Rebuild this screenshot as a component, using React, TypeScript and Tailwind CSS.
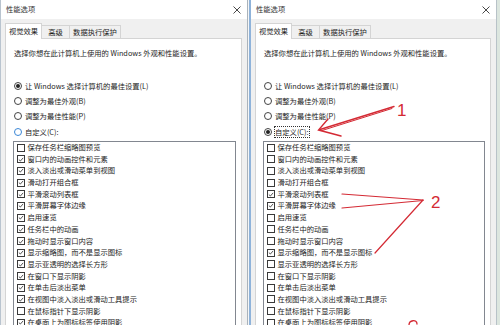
import React from "react";

const items = [
  "保存任务栏缩略图预览",
  "窗口内的动画控件和元素",
  "淡入淡出或滑动菜单到视图",
  "滑动打开组合框",
  "平滑滚动列表框",
  "平滑屏幕字体边缘",
  "启用速览",
  "任务栏中的动画",
  "拖动时显示窗口内容",
  "显示缩略图，而不是显示图标",
  "显示亚透明的选择长方形",
  "在窗口下显示阴影",
  "在单击后淡出菜单",
  "在视图中淡入淡出或滑动工具提示",
  "在鼠标指针下显示阴影",
  "在桌面上为图标标签使用阴影",
];

const leftChecks = [0, 1, 1, 1, 1, 1, 1, 1, 1, 1, 1, 1, 1, 1, 0, 1];
const rightChecks = [0, 0, 0, 0, 1, 1, 0, 0, 0, 1, 0, 0, 0, 0, 0, 0];

const radios = [
  "让 Windows 选择计算机的最佳设置(L)",
  "调整为最佳外观(B)",
  "调整为最佳性能(P)",
  "自定义(C):",
];

function Radio({ selected, hover, focus, label }: { selected: boolean; hover: boolean; focus: boolean; label: string }) {
  return (
    <div className="flex items-center h-[15.3px]">
      <div
        className={
          "w-[8px] h-[8px] rounded-full border bg-white flex items-center justify-center shrink-0 " +
          (hover ? "border-[#3b87d6]" : "border-[#444]")
        }
      >
        {selected && <div className="w-[4px] h-[4px] rounded-full bg-[#222]" />}
      </div>
      <span
        className={
          "ml-[3px] whitespace-nowrap leading-[10px] " +
          (focus ? "outline outline-1 outline-dotted outline-[#333]" : "")
        }
      >
        {label}
      </span>
    </div>
  );
}

function CheckBox({ checked }: { checked: boolean }) {
  return (
    <div className="w-[8px] h-[8px] border border-[#3a3a3a] bg-white shrink-0 flex items-center justify-center">
      {checked && (
        <svg width="7" height="7" viewBox="0 0 7 7">
          <path d="M1 3.6 L2.8 5.3 L6 1.6" fill="none" stroke="#222" strokeWidth="0.9" />
        </svg>
      )}
    </div>
  );
}

function Window({ sel, checks, right }: { sel: number; checks: number[]; right: boolean }) {
  return (
    <div
      className={
        "w-[248px] h-[325px] flex flex-col shrink-0 overflow-hidden " +
        (right ? "border-l-2 border-l-[#8fb3da] border-r border-r-[#b8c2c8]" : "border-l border-l-[#b9c4cf] border-r border-r-[#aab3bb]")
      }
    >
      <div className="h-[19px] bg-white flex items-center justify-between pl-[5px] pr-[5px] shrink-0">
        <span className="text-[#333]">性能选项</span>
        <svg width="8" height="8" viewBox="0 0 8 8" className="mr-[1px]">
          <path d="M0.5 0.5 L7.5 7.5 M7.5 0.5 L0.5 7.5" stroke="#333" strokeWidth="0.9" />
        </svg>
      </div>
      <div className="flex-1 bg-[#f0f0f0] flex flex-col pt-[3px] pl-[4px] pr-[5px]">
        <div className="flex items-end h-[16px] shrink-0">
          <div className="relative z-10 w-[37px] h-[16px] -mb-px bg-white border border-b-0 border-[#d4d4d4] flex items-center justify-center">
            视觉效果
          </div>
          <div className="w-[28px] h-[13px] border border-l-0 border-b-0 border-[#d4d4d4] flex items-center justify-center">
            高级
          </div>
          <div className="w-[51px] h-[13px] border border-l-0 border-b-0 border-[#d4d4d4] flex items-center justify-center">
            数据执行保护
          </div>
        </div>
        <div className="flex-1 bg-white border border-[#d4d4d4] pl-[8px] pr-[5px] pt-[9px]">
          <div className="h-[11px] whitespace-nowrap">选择你想在此计算机上使用的 Windows 外观和性能设置。</div>
          <div className="mt-[19px]">
            {radios.map((r, i) => (
              <Radio key={i} label={r} selected={i === sel} hover={!right && i === 3} focus={right && i === 3} />
            ))}
          </div>
          <div className="mt-[1.5px] -ml-[1px] border border-[#828790] bg-white pl-[3px] pt-0">
            {items.map((t, i) => (
              <div key={i} className="flex items-center h-[11.7px]">
                <CheckBox checked={checks[i] === 1} />
                <span className="ml-[2.5px] whitespace-nowrap">{t}</span>
              </div>
            ))}
          </div>
        </div>
      </div>
    </div>
  );
}

export default function App() {
  return (
    <div className="relative w-[500px] h-[325px] overflow-hidden flex bg-[#dce6df] text-[7.3px] leading-[11px] text-[#1c1c1c] font-['Noto_Sans_CJK_SC',sans-serif]">
      <Window sel={0} checks={leftChecks} right={false} />
      <div className="w-[1px] bg-[#f4f6f8] shrink-0" />
      <Window sel={3} checks={rightChecks} right={true} />
      <svg className="absolute inset-0 pointer-events-none" width="500" height="325" viewBox="0 0 500 325">
        <g stroke="#d42a34" fill="none" strokeLinecap="round">
          <path d="M394 106.5 L320 129.5" strokeWidth="1.4" />
          <path d="M392 108.5 L322 130.5" strokeWidth="1" />
          <path d="M328 119 L318.5 130 L341 136" strokeWidth="1.4" />
          <path d="M342 194 L423 200" strokeWidth="1.2" />
          <path d="M342 208 L423 200.5" strokeWidth="1.2" />
          <path d="M423 200 L375 253" strokeWidth="1.2" />
          <path d="M409 325 C409 320 417 319 417 324" strokeWidth="1.3" />
        </g>
        <text x="397" y="116" fill="#d42a34" fontSize="17" fontFamily="Liberation Sans, sans-serif">1</text>
        <text x="431" y="207.5" fill="#d42a34" fontSize="17" fontFamily="Liberation Sans, sans-serif">2</text>
      </svg>
    </div>
  );
}
